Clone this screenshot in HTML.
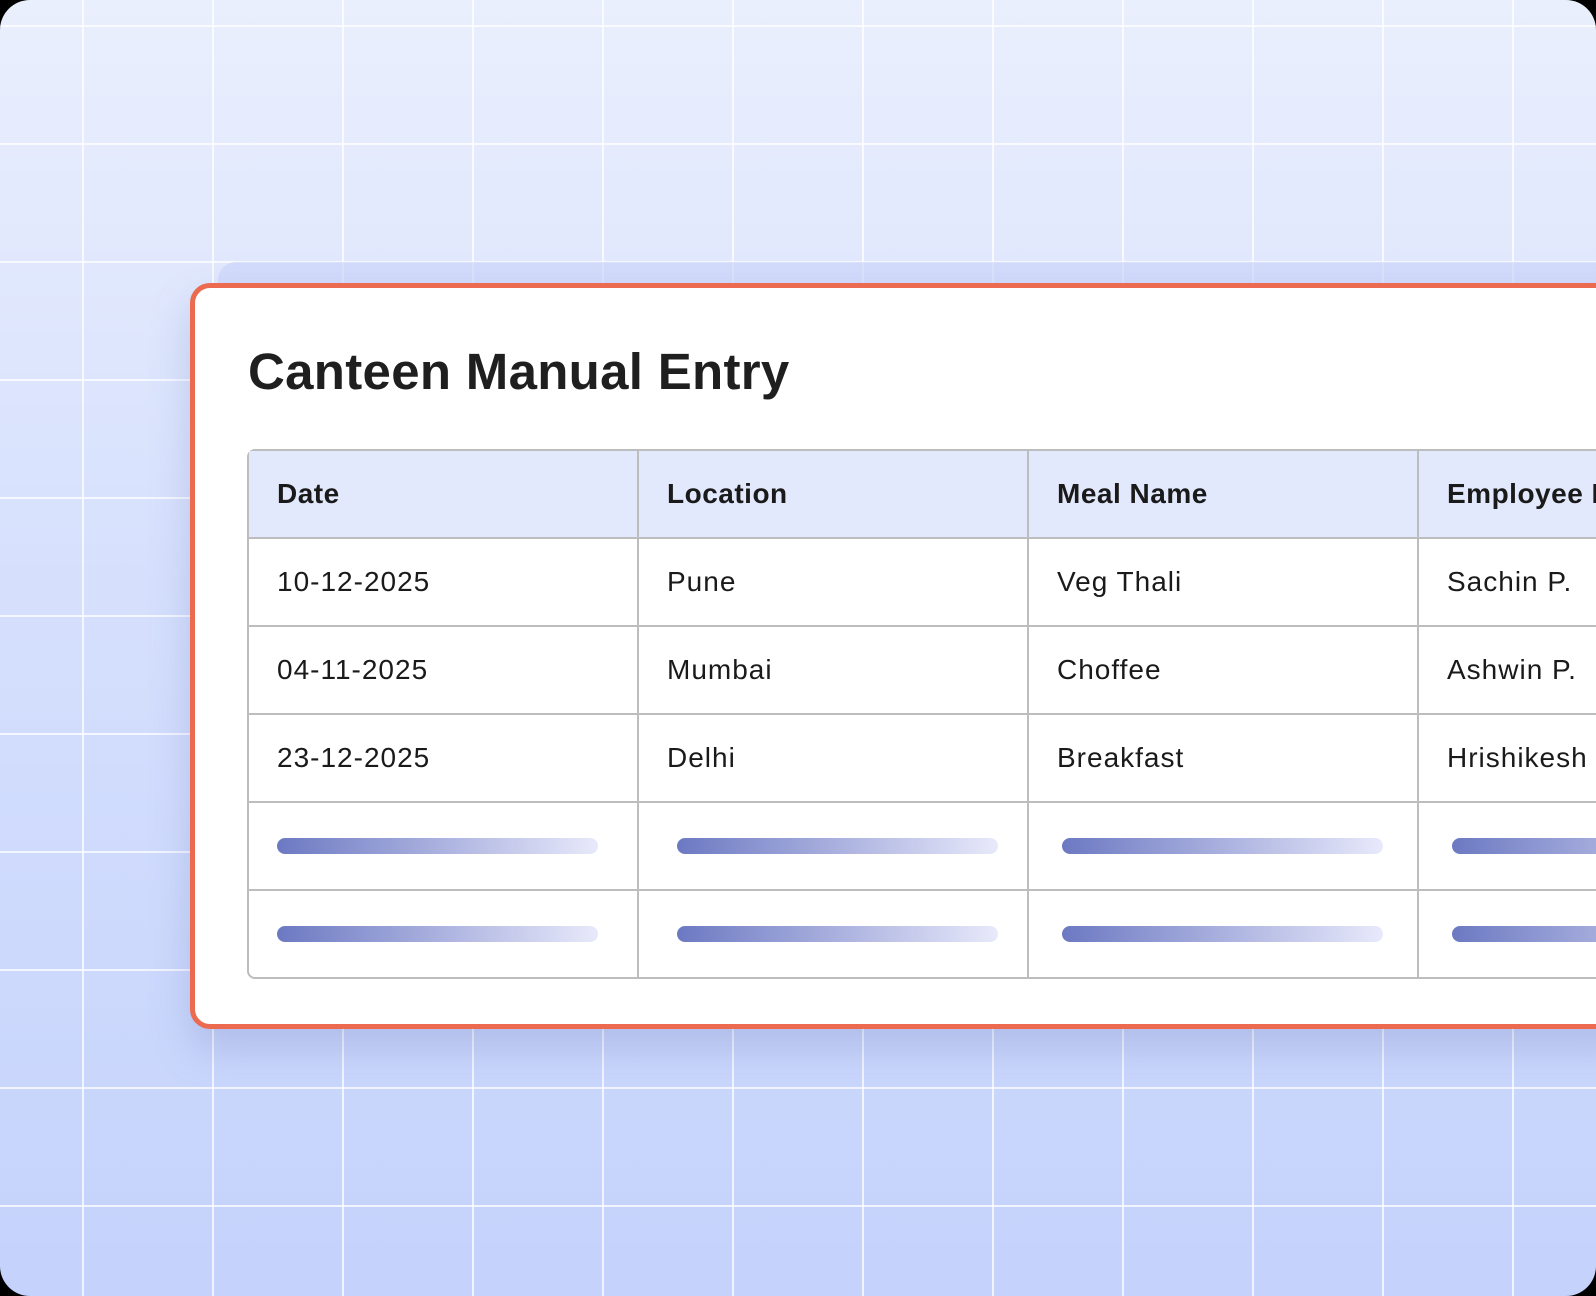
<!DOCTYPE html>
<html><head><style>
html,body{margin:0;padding:0;background:#000;}
.wrap{position:relative;width:1596px;height:1296px;overflow:hidden;border-radius:30px;
background:linear-gradient(180deg,#eaeffd 0%,#d6e0fd 45%,#c4d2fc 100%);}
.vl{position:absolute;top:0;width:2px;height:1296px;background:rgba(255,255,255,.75)}
.hl{position:absolute;left:0;height:2px;width:1596px;background:rgba(255,255,255,.75)}
.slab{position:absolute;left:218px;top:262px;width:1400px;height:60px;border-radius:18px;background:rgba(200,210,250,.6)}
.card{position:absolute;left:190px;top:283px;width:1450px;height:746px;box-sizing:border-box;border:5px solid #ec6a4f;border-radius:20px;background:#fff;box-shadow:0 20px 40px rgba(90,110,180,.25);overflow:hidden}
h1{position:absolute;left:53px;top:54px;margin:0;font:bold 51px "Liberation Sans",sans-serif;color:#1f1f1f;letter-spacing:0.3px}
table{position:absolute;left:52px;top:161px;table-layout:fixed;width:1564px;border-collapse:separate;border-spacing:0;border:2px solid #bdbdbd;border-radius:8px;font-family:"Liberation Sans",sans-serif;font-size:28px;letter-spacing:1px;color:#1a1a1a}
td,th{width:390px;height:88px;box-sizing:border-box;padding:0 0 0 28px;text-align:left;border-right:2px solid #bdbdbd;border-bottom:2px solid #bdbdbd;white-space:nowrap;overflow:hidden}
th{background:#e3e9fd;font-weight:bold;letter-spacing:0.5px}
tr:last-child td{border-bottom:none;height:86px}
.bar{display:block;width:321px;height:16px;border-radius:8px;background:linear-gradient(90deg,#6c79c2,#e8e9fb)}
</style></head><body><div class="wrap">
<div class="vl" style="left:82px"></div><div class="vl" style="left:212px"></div><div class="vl" style="left:342px"></div><div class="vl" style="left:472px"></div><div class="vl" style="left:602px"></div><div class="vl" style="left:732px"></div><div class="vl" style="left:862px"></div><div class="vl" style="left:992px"></div><div class="vl" style="left:1122px"></div><div class="vl" style="left:1252px"></div><div class="vl" style="left:1382px"></div><div class="vl" style="left:1512px"></div>
<div class="hl" style="top:25px"></div><div class="hl" style="top:143px"></div><div class="hl" style="top:261px"></div><div class="hl" style="top:379px"></div><div class="hl" style="top:497px"></div><div class="hl" style="top:615px"></div><div class="hl" style="top:733px"></div><div class="hl" style="top:851px"></div><div class="hl" style="top:969px"></div><div class="hl" style="top:1087px"></div><div class="hl" style="top:1205px"></div>
<div class="slab"></div>
<div class="card">
<h1>Canteen Manual Entry</h1>
<table>
<tr><th>Date</th><th>Location</th><th>Meal Name</th><th>Employee Name</th></tr>
<tr><td>10-12-2025</td><td>Pune</td><td>Veg Thali</td><td>Sachin P.</td></tr>
<tr><td>04-11-2025</td><td>Mumbai</td><td>Choffee</td><td>Ashwin P.</td></tr>
<tr><td>23-12-2025</td><td>Delhi</td><td>Breakfast</td><td>Hrishikesh</td></tr>
<tr><td><span class="bar"></span></td><td style="padding-left:38px"><span class="bar"></span></td><td style="padding-left:33px"><span class="bar"></span></td><td style="padding-left:33px"><span class="bar"></span></td></tr>
<tr><td><span class="bar"></span></td><td style="padding-left:38px"><span class="bar"></span></td><td style="padding-left:33px"><span class="bar"></span></td><td style="padding-left:33px"><span class="bar"></span></td></tr>
</table>
</div>
</div></body></html>
